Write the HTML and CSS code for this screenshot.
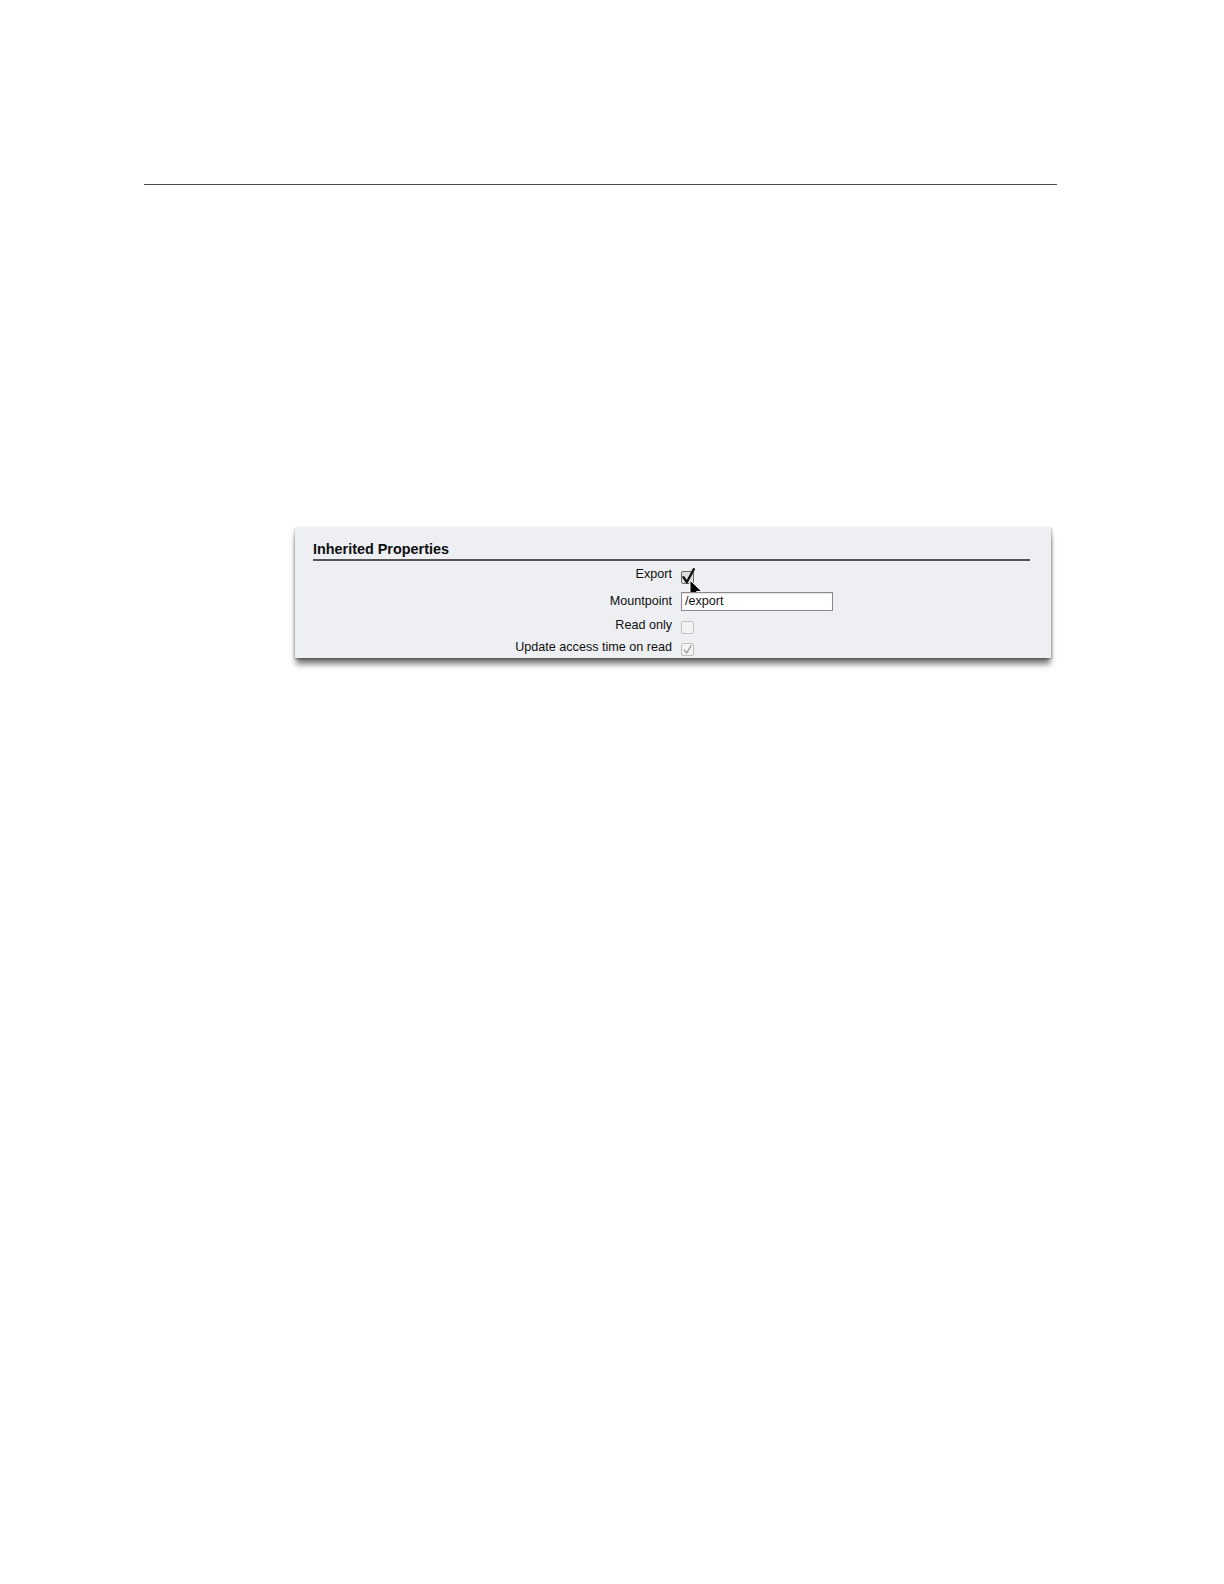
FILE: index.html
```html
<!DOCTYPE html>
<html>
<head>
<meta charset="utf-8">
<link rel="stylesheet" href="styles.css">
</head>
<body>
<div class="page">
  <div class="rule"></div>
  <section class="panel">
    <h2 class="panel-title">Inherited Properties</h2>
    <div class="props">
      <div class="row row-first">
        <span class="label">Export</span>
        <span class="ctl">
          <span class="cb cb-on">
            <svg class="check" width="15" height="17" viewBox="0 0 15 17"><path d="M2.4 9.2 L5.8 14.2 L12.8 1.2" fill="none" stroke="#111" stroke-width="2.4" stroke-linejoin="round" stroke-linecap="round"/></svg>
          </span>
          <svg class="cursor" width="15" height="21" viewBox="0 0 15 21"><path d="M1 1 L1 17 L4.8 13.4 L7.6 19.8 L10.3 18.6 L7.6 12.4 L12.8 12.4 Z" fill="#000" stroke="#fff" stroke-width="1" stroke-linejoin="round"/></svg>
        </span>
      </div>
      <div class="row row-input">
        <span class="label">Mountpoint</span>
        <span class="ctl"><span class="field">/export</span></span>
      </div>
      <div class="row">
        <span class="label">Read only</span>
        <span class="ctl"><span class="cb cb-dis"></span></span>
      </div>
      <div class="row">
        <span class="label">Update access time on read</span>
        <span class="ctl">
          <span class="cb cb-dis">
            <svg class="check-dis" width="11" height="11" viewBox="0 0 11 11"><path d="M2 5.6 L4.6 9 L9.4 1.2" fill="none" stroke="#959595" stroke-width="1.2"/></svg>
          </span>
        </span>
      </div>
    </div>
  </section>
</div>
</body>
</html>
```
FILE: styles.css
```css
html, body {
  margin: 0;
  padding: 0;
  background: #ffffff;
}
body {
  font-family: "Liberation Sans", Arial, sans-serif;
  color: #111;
}
.page {
  width: 1224px;
  height: 1584px;
  padding-top: 184px;
  box-sizing: border-box;
}
.rule {
  margin-left: 144px;
  width: 913px;
  height: 1px;
  background: #4a4a4a;
}
.panel {
  margin-top: 342px;
  margin-left: 295px;
  width: 756px;
  height: 131px;
  box-sizing: border-box;
  padding: 13px 21px 0 18px;
  background: #eeeff2;
  box-shadow: 0 7px 6px -1px rgba(0,0,0,0.55), 1px 1px 2px rgba(0,0,0,0.25), -1px 1px 2px rgba(0,0,0,0.15);
}
.panel-title {
  margin: 0;
  font-size: 14.4px;
  line-height: 18px;
  font-weight: bold;
  color: #0d0d0d;
  padding-bottom: 1px;
  border-bottom: 2px solid #555;
}
.props {
  display: grid;
  grid-template-columns: 359px 1fr;
}
.row {
  display: contents;
}
.label {
  font-size: 12.6px;
  text-align: right;
  height: 22px;
  line-height: 22px;
  color: #0f0f0f;
}
.ctl {
  position: relative;
  height: 22px;
  display: flex;
  align-items: center;
  padding-left: 9px;
}
.row-first .label,
.row-first .ctl {
  height: 27px;
  line-height: 27px;
}
.row-input .label,
.row-input .ctl {
  height: 26px;
  line-height: 26px;
}
.cb {
  position: relative;
  width: 11px;
  height: 11px;
  border: 1px solid #888;
  border-radius: 2px;
  background: #f4f4f4;
  margin-top: 5px;
}
.cb-on {
  border-color: #6a6a6a;
  background: #dedede;
}
.cb-dis {
  border-color: #c2c2c2;
  background: #f3f3f3;
}
.check {
  position: absolute;
  left: -1px;
  top: -4px;
}
.check-dis {
  position: absolute;
  left: 0;
  top: 0;
}
.cursor {
  position: absolute;
  left: 17px;
  top: 18px;
}
.field {
  display: block;
  width: 147px;
  height: 17px;
  border: 1px solid #8a8a8a;
  background: #ffffff;
  font-size: 12.6px;
  line-height: 17px;
  padding-left: 3px;
  color: #111;
  box-shadow: inset 0 1px 1px rgba(0,0,0,0.12);
}
```
